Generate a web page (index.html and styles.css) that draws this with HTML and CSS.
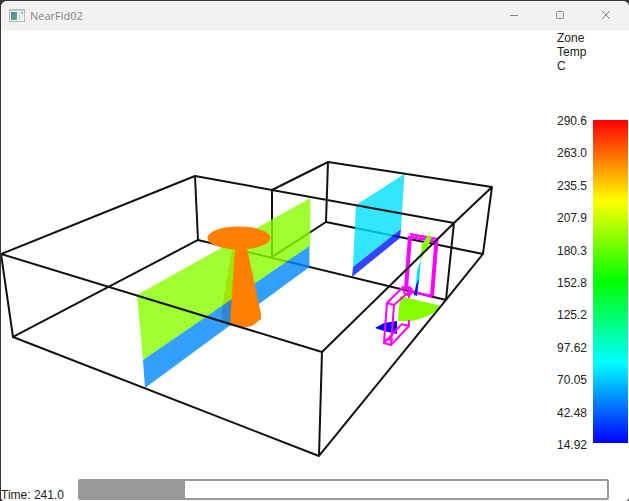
FILE: index.html
```html
<!DOCTYPE html>
<html lang="en">
<head>
<meta charset="utf-8">
<meta name="viewport" content="width=device-width, initial-scale=1">
<title>NearFld02</title>
<link rel="stylesheet" href="styles.css">
</head>
<body>
<div class="window">
  <header class="titlebar">
    <svg class="app-icon" viewBox="0 0 16 14" aria-hidden="true">
      <defs>
        <linearGradient id="tile" x1="0" y1="0" x2="1" y2="1">
          <stop offset="0" stop-color="#4a7db0"/>
          <stop offset="1" stop-color="#5fb58a"/>
        </linearGradient>
      </defs>
      <rect x="0.5" y="0.5" width="15" height="12" fill="#eef0f2" stroke="#b4b8bc"/>
      <path d="M1 1.5h14" stroke="#c3ccd4"/>
      <rect x="2" y="3" width="6" height="8" fill="url(#tile)"/>
      <rect x="9" y="3" width="3" height="8" fill="#dfe3e5"/>
      <path d="M12 3h2v3z" fill="#69a98e"/>
    </svg>
    <h1 class="title">NearFld02</h1>
    <div class="controls">
      <button class="control" type="button" aria-label="Minimize">
        <svg viewBox="0 0 10 10"><path d="M1 4.5h8"/></svg>
      </button>
      <button class="control" type="button" aria-label="Maximize">
        <svg viewBox="0 0 10 10"><rect x="1.5" y="0.5" width="7" height="7" rx="1"/></svg>
      </button>
      <button class="control" type="button" aria-label="Close">
        <svg viewBox="0 0 10 10"><path d="M1 0l8 8M9 0l-8 8"/></svg>
      </button>
    </div>
  </header>

  <main class="viewer">
    <svg class="scene" viewBox="1 30 556 449" preserveAspectRatio="xMinYMin meet" role="img" aria-label="Two adjoining rooms with temperature slices, a fire plume and vent flows">
      <!-- far edges of both rooms -->
      <g class="edge">
        <path d="M195 176L198 240L446 300M198 240L13 337"/>
        <path d="M272 190V257L326 222L483 254M326 222L328 162"/>
      </g>
      <!-- fire plume -->
      <path fill="#ff8000" d="M232 248L221 315L223 322L231 326L246 327L255 324L261 318L247 248z"/>
      <!-- upper and lower layer slices -->
      <path fill="#88ff00" opacity="0.8" d="M137 295L310.500 198L310 246L143 360z"/>
      <path fill="#0088ff" opacity="0.8" d="M143 360L309.500 246V267L145 388z"/>
      <path fill="#00dfff" opacity="0.8" d="M356 205L404.500 174L401 229L353 267z"/>
      <path fill="#0015ff" opacity="0.8" d="M353 267L401 229L400 238L352 277z"/>
      <path fill="#ff8000" d="M235 248L230 325L238 326L246 327L252 326L255 323L261 319L261 314L247 248z"/>
      <ellipse fill="#ff8000" cx="239" cy="238" rx="31.500" ry="11.500"/>
      <!-- vent frames and flows -->
      <g fill="none" stroke="#ff00ff">
        <path stroke-width="4" d="M410 236L406 289M436.500 240L432 296"/>
        <path stroke-width="2" d="M410 234L438 239M409 237L437 242M412 291L432 297"/>
        <path stroke-width="2" stroke-dasharray="3 1" d="M411 236L437 241M413 293L431 295"/>
      </g>
      <path fill="#88ff00" d="M431 231L429 237L432 236L428 247L420 261L422 244L425 240z"/>
      <path fill="#00dfff" d="M421 260L419 283L416 285L417 271z"/>
      <path fill="#0015ff" d="M419 279L417 296L414 295L416 285z"/>
      <path fill="#88ff00" d="M400 296L442 306Q430 318 411 321L398 321z"/>
      <path fill="#0000ff" d="M375 328L384 323L397 321V334L384 331z"/>
      <g fill="none" stroke="#ff00ff" stroke-width="2" stroke-linejoin="round">
        <path d="M394 305L411 290L403 287L387 303L394 305L391 345L384 343L387 303"/>
        <path d="M409 290V298M409 320V326L391 345M401 325L385 342L387 339L393 340M401 324L409 326"/>
        <circle cx="408" cy="291" r="4"/>
      </g>
      <!-- near edges of both rooms -->
      <g class="edge">
        <path d="M1 254L195 176L454 223L322 352L1 254L13 337L319 456L446 300L454 223"/>
        <path d="M322 352L319 456"/>
        <path d="M272 190L328 162L492 187L454 223M492 187L483 254L446 300"/>
      </g>
    </svg>

    <aside class="legend">
      <p class="legend-title">Zone<br>Temp<br>C</p>
      <div class="scale">
        <ul class="ticks">
          <li>290.6</li><li>263.0</li><li>235.5</li><li>207.9</li><li>180.3</li><li>152.8</li><li>125.2</li><li>97.62</li><li>70.05</li><li>42.48</li><li>14.92</li>
        </ul>
        <div class="ramp"></div>
      </div>
    </aside>
  </main>

  <footer class="timebar">
    <label class="time" for="timeline">Time: 241.0</label>
    <progress class="timeline" id="timeline" value="20" max="100"></progress>
  </footer>
</div>
</body>
</html>
```
FILE: styles.css
```css
* {
  box-sizing: border-box;
}

body {
  margin: 0;
  padding: 1px 0 0 1px;
  background: #38343a;
  color: #222;
  font: 12px/14px "Liberation Sans", Arial, sans-serif;
}

.window {
  display: grid;
  grid-template-rows: auto 1fr auto;
  height: calc(100vh - 1px);
  overflow: hidden;
  border-radius: 6px 6px 4px 4px;
  background: #fff;
}

.titlebar {
  display: flex;
  align-items: center;
  gap: 5px;
  height: 29px;
  padding-left: 8px;
  background: #f2f2f2;
}

.app-icon {
  width: 16px;
  height: 14px;
}

.title {
  flex: 1;
  margin: 0;
  color: #858585;
  font: 11px/16px "Open Sans", sans-serif;
}

.controls {
  display: flex;
}

.control {
  display: grid;
  place-items: center;
  width: 46px;
  height: 29px;
  padding: 0;
  border: 0;
  background: none;
}

.control svg {
  width: 10px;
  height: 10px;
  fill: none;
  stroke: #858585;
}

.viewer {
  display: grid;
  grid-template-columns: 1fr auto;
  min-height: 0;
}

.scene {
  width: 100%;
  height: 100%;
  min-height: 0;
}

.edge {
  fill: none;
  stroke: #111;
  stroke-width: 2;
  stroke-linejoin: round;
}

.legend {
  display: flex;
  flex-direction: column;
  gap: 41px;
  min-height: 0;
  padding: 1px 1px 27px 0;
}

.legend-title {
  margin: 0;
}

.scale {
  display: flex;
  flex: 1;
  gap: 6px;
}

.ticks {
  display: flex;
  flex-direction: column;
  justify-content: space-between;
  margin: 0;
  padding: 0;
  list-style: none;
}

.ramp {
  width: 35px;
  margin: 6px 0 9px;
  background: linear-gradient(#f00, #ff0 25%, #0f0 50%, #0ff 75%, #00f);
}

.timebar {
  display: flex;
  align-items: flex-end;
  gap: 14px;
  padding-right: 20px;
}

.time {
  line-height: 12px;
}

.timeline {
  flex: 1;
  height: 21px;
  margin-bottom: 1px;
  overflow: hidden;
  appearance: none;
  border: 2px solid #999;
  border-radius: 2px;
  background: #fff;
}

.timeline::-webkit-progress-bar {
  background: #fff;
}

.timeline::-webkit-progress-value {
  background: #999;
}
```
